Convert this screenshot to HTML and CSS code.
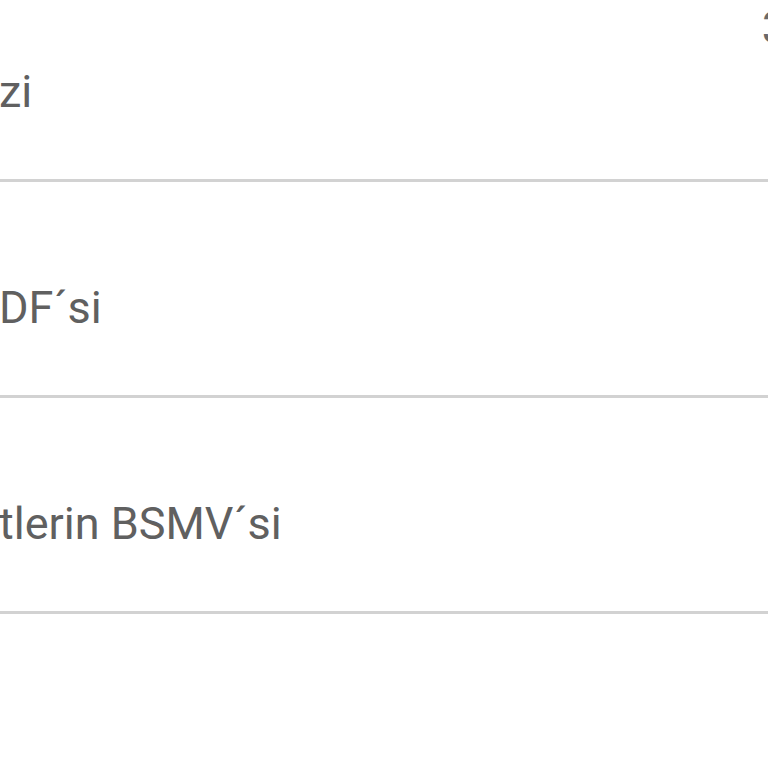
FILE: index.html
```html
<!DOCTYPE html>
<html lang="tr">
  <head>
    <meta charset="UTF-8" />
    <meta name="viewport" content="width=device-width, initial-scale=1.0" />
    <title>Belgeler</title>
    <link rel="stylesheet" href="styles.css">
  </head>
  <body>
    <div class="doc-list">
      <div class="doc-row first">
        <div class="doc-meta"><span class="doc-count">3</span></div>
        <span class="doc-title">zi</span>
      </div>
      <div class="doc-row">
        <span class="doc-title">DF´si</span>
      </div>
      <div class="doc-row">
        <span class="doc-title">tlerin BSMV´si</span>
      </div>
      <div class="doc-row last"></div>
    </div>
  </body>
</html>
```

FILE: styles.css
```css
html, body {
  margin: 0;
  height: 100%;
  overflow: hidden;
}
body {
  background-color: #ffffff;
  font-family: Roboto, "Noto Sans", Arial, sans-serif;
  color: #606060;
}
.doc-list {
  display: flex;
  flex-direction: column;
}
.doc-row {
  box-sizing: border-box;
  height: 216px;
  flex-shrink: 0;
  border-bottom: 3px solid #d2d2d2;
  display: flex;
  flex-direction: column;
  justify-content: flex-end;
  padding-bottom: 65px;
}
.doc-row.first {
  height: 182px;
  position: relative;
}
.doc-row.last {
  border-bottom: none;
}
.doc-title {
  font-size: 45px;
  line-height: 45px;
  white-space: nowrap;
  margin-left: -1px;
}
.doc-meta {
  position: absolute;
  top: 5px;
  right: -19px;
  font-size: 45px;
  line-height: 45px;
  color: #6a6a6a;
}
```
